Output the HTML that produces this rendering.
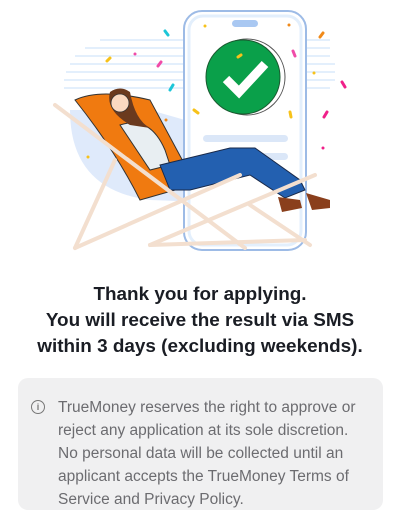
<!DOCTYPE html>
<html><head><style>
body{margin:0;width:400px;height:519px;background:#fff;font-family:"Liberation Sans",sans-serif;position:relative;overflow:hidden}
.h{position:absolute;top:282px;left:0;width:400px;text-align:center;font-weight:bold;font-size:18.9px;line-height:26px;color:#1a1d24}
.box{position:absolute;left:18px;top:378px;width:365px;height:132px;background:#f0f0f1;border-radius:10px}
.t{position:absolute;left:58px;top:396px;font-size:15.5px;line-height:23px;color:#6c6c70;white-space:nowrap}
.i{position:absolute;left:31px;top:400px;width:12px;height:12px;border:1.3px solid #777;border-radius:50%;font-size:9px;line-height:12px;text-align:center;color:#777;font-weight:bold}
</style></head><body>
<svg width="400" height="270" style="position:absolute;left:0;top:0">
<g stroke="#e3effc" stroke-width="2">
<line x1="100" y1="40" x2="330" y2="40"/><line x1="85" y1="48" x2="330" y2="48"/><line x1="75" y1="56" x2="330" y2="56"/><line x1="70" y1="64" x2="335" y2="64"/><line x1="66" y1="72" x2="335" y2="72"/><line x1="64" y1="80" x2="335" y2="80"/><line x1="64" y1="88" x2="330" y2="88"/>
</g>
<path d="M70 110 Q70 190 150 200 L290 205 L290 150 L150 110Z" fill="#dfeafb"/>
<rect x="184" y="11" width="122" height="239" rx="18" fill="#fff" stroke="#9dbbe6" stroke-width="2"/>
<rect x="189" y="16" width="112" height="229" rx="14" fill="none" stroke="#e3effc" stroke-width="3"/>
<rect x="232" y="20" width="26" height="7" rx="3.5" fill="#a9c8f2"/>
<circle cx="247" cy="77" r="38" fill="#fff" stroke="#555" stroke-width="1"/>
<circle cx="243" cy="77" r="37" fill="#0aa04a" stroke="#1a5a30" stroke-width="1"/>
<path d="M226 79 L239 92 L265 64" stroke="#fff" stroke-width="9" fill="none" stroke-linejoin="miter"/>
<rect x="203" y="135" width="85" height="7" rx="3.5" fill="#dbe7f8"/>
<rect x="250" y="153" width="38" height="7" rx="3.5" fill="#dbe7f8"/>
<path d="M75 100 Q100 88 150 100 L185 165 Q185 185 175 190 L140 200 Q115 150 75 100Z" fill="#f07a10" stroke="#333" stroke-width="1"/>
<path d="M120 125 Q150 115 165 150 L170 165 L150 170Z" fill="#e8eef2" stroke="#333" stroke-width="1"/>
<path d="M160 165 L230 148 L255 148 L300 180 L305 190 L285 198 L250 175 L190 190 L170 190Z" fill="#2360b0" stroke="#1a2a4a" stroke-width="1"/>
<path d="M110 92 Q120 85 130 92 Q135 120 150 128 L130 125 Q105 110 110 92Z" fill="#6b3a1e"/>
<circle cx="120" cy="103" r="9" fill="#fbd9c0" stroke="#333" stroke-width="0.8"/>
<path d="M278 197 L300 200 L302 208 L282 212Z M306 193 L330 200 L330 208 L312 210Z" fill="#8a3f1c"/>
<g stroke="#f3dfcf" stroke-width="4" stroke-linecap="round">
<line x1="55" y1="105" x2="245" y2="248"/><line x1="115" y1="160" x2="75" y2="248"/><line x1="75" y1="248" x2="240" y2="175"/><line x1="150" y1="245" x2="315" y2="175"/><line x1="250" y1="205" x2="310" y2="245"/><line x1="150" y1="245" x2="305" y2="240"/>
</g>
<g stroke-width="3" stroke-linecap="round">
<line x1="165" y1="31" x2="168" y2="35" stroke="#1cc6d8"/><line x1="107" y1="61" x2="110" y2="58" stroke="#f7c21a"/><line x1="158" y1="66" x2="161" y2="62" stroke="#f04ba8"/><line x1="170" y1="90" x2="173" y2="85" stroke="#1cc6d8"/><line x1="194" y1="110" x2="198" y2="113" stroke="#f7c21a"/><line x1="320" y1="37" x2="323" y2="33" stroke="#f08a1a"/><line x1="293" y1="51" x2="295" y2="56" stroke="#f04ba8"/><line x1="342" y1="82" x2="345" y2="87" stroke="#f0208a"/><line x1="324" y1="117" x2="327" y2="112" stroke="#f0208a"/><line x1="290" y1="112" x2="291" y2="117" stroke="#f7c21a"/><line x1="238" y1="57" x2="241" y2="55" stroke="#f7c21a"/>
</g>
<g><circle cx="205" cy="26" r="1.5" fill="#f7c21a"/><circle cx="289" cy="25" r="1.5" fill="#f08a1a"/><circle cx="135" cy="54" r="1.5" fill="#f04ba8"/><circle cx="314" cy="73" r="1.5" fill="#f7c21a"/><circle cx="323" cy="148" r="1.5" fill="#f0208a"/><circle cx="88" cy="157" r="1.5" fill="#f7c21a"/><circle cx="166" cy="120" r="1.5" fill="#f08a1a"/></g>
</svg>
<div class="h">Thank you for applying.<br>You will receive the result via SMS<br>within 3 days (excluding weekends).</div>
<div class="box"></div>
<div class="i">i</div>
<div class="t">TrueMoney reserves the right to approve or<br>reject any application at its sole discretion.<br>No personal data will be collected until an<br>applicant accepts the TrueMoney Terms of<br>Service and Privacy Policy.</div>
</body></html>
